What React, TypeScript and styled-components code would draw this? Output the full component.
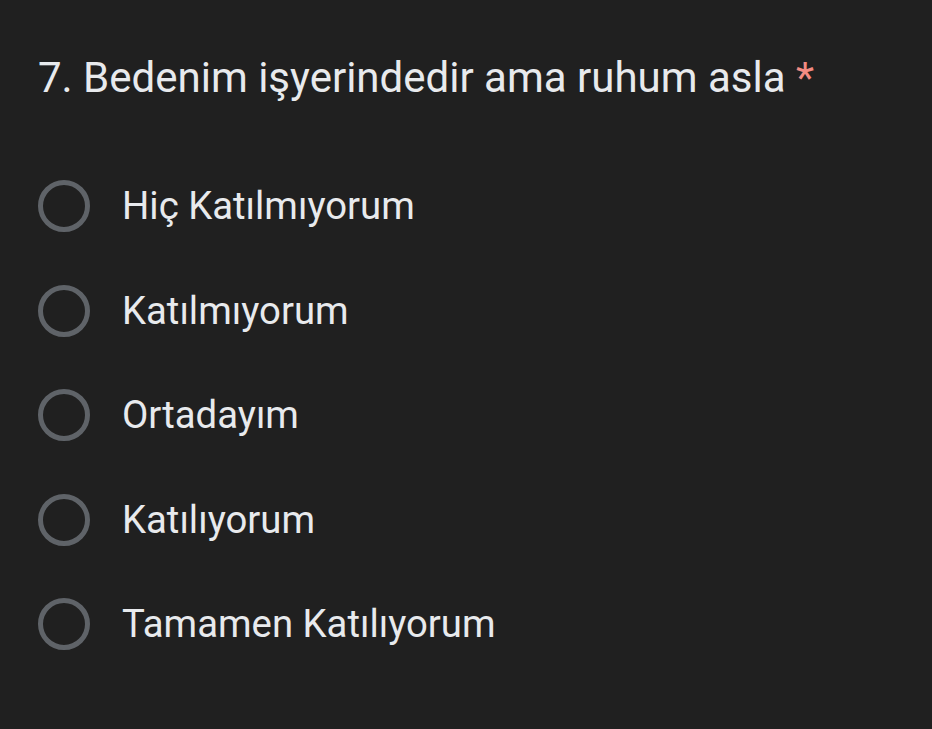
import { FC } from "react";
import styled, { createGlobalStyle } from "styled-components";

const GlobalStyle = createGlobalStyle`
  html, body {
    margin: 0;
    padding: 0;
    background: #202020;
  }
`;

const options: string[] = [
	"Hiç Katılmıyorum",
	"Katılmıyorum",
	"Ortadayım",
	"Katılıyorum",
	"Tamamen Katılıyorum",
];

const App: FC = () => {
	return (
		<>
			<GlobalStyle />
			<Page>
				<Title>
					7. Bedenim işyerindedir ama ruhum asla <Required>*</Required>
				</Title>
				<OptionList>
					{options.map((label) => (
						<Option key={label}>
							<Radio />
							<Label>{label}</Label>
						</Option>
					))}
				</OptionList>
			</Page>
		</>
	);
};

const Page = styled.div`
  width: 932px;
  height: 729px;
  box-sizing: border-box;
  padding: 52px 0 0 38px;
  background: #202020;
  font-family: Roboto, "Noto Sans", sans-serif;
  color: #e8eaed;
`;

const Title = styled.h1`
  margin: 0;
  font-size: 42px;
  font-weight: 400;
  line-height: 52px;
`;

const Required = styled.span`
  color: #f28b82;
`;

const OptionList = styled.div`
  display: flex;
  flex-direction: column;
  gap: 52.6px;
  margin-top: 76px;
`;

const Option = styled.div`
  display: flex;
  flex-direction: row;
  align-items: center;
  gap: 32px;
  height: 52px;
`;

const Radio = styled.span`
  width: 52px;
  height: 52px;
  box-sizing: border-box;
  border: 5px solid #5f6368;
  border-radius: 50%;
  flex-shrink: 0;
`;

const Label = styled.span`
  font-size: 38.3px;
  line-height: 52px;
`;

export default App;
